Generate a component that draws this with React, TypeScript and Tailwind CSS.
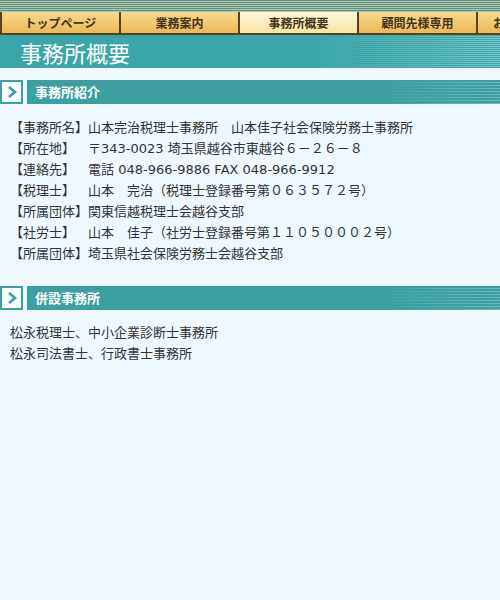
const tabs = [
  { label: "トップページ", active: false },
  { label: "業務案内", active: false },
  { label: "事務所概要", active: true },
  { label: "顧問先様専用", active: false },
  { label: "お問い合わせ", active: false },
];

const profile: [string, string][] = [
  ["【事務所名】", "山本完治税理士事務所　山本佳子社会保険労務士事務所"],
  ["【所在地】", "〒343-0023 埼玉県越谷市東越谷６－２６－８"],
  ["【連絡先】", "電話 048-966-9886 FAX 048-966-9912"],
  ["【税理士】", "山本　完治（税理士登録番号第０６３５７２号）"],
  ["【所属団体】", "関東信越税理士会越谷支部"],
  ["【社労士】", "山本　佳子（社労士登録番号第１１０５０００２号）"],
  ["【所属団体】", "埼玉県社会保険労務士会越谷支部"],
];

export default function App() {
  return (
    <div className="min-h-[600px] w-[500px] overflow-hidden bg-[#eff8ff] font-['DejaVu_Sans','Noto_Sans_CJK_JP',sans-serif] text-[#333]">
      <div className="h-3 bg-[repeating-linear-gradient(to_bottom,#64907f_0px,#64907f_1px,#a8c4ad_1px,#a8c4ad_2px)]" />

      <nav className="flex h-[23px] overflow-hidden border-b-2 border-l-2 border-[#5a4020]">
        {tabs.map((t, i) => (
          <div
            key={t.label}
            className={`flex w-[119px] shrink-0 items-center whitespace-nowrap border-r-2 border-[#5a4020] font-['Noto_Sans_CJK_JP',sans-serif] text-[12px] font-bold text-[#45331a] ${
              i === tabs.length - 1 ? "justify-start pl-[15px]" : "justify-center"
            } ${
              t.active
                ? "bg-[linear-gradient(to_bottom,#fff6d6,#f8e4a6)]"
                : "bg-[linear-gradient(to_bottom,#f8d98c,#ebb95c)]"
            }`}
          >
            {t.label}
          </div>
        ))}
      </nav>

      <div className="flex h-[33px] items-center bg-[linear-gradient(to_right,#3ba6a9_62%,rgba(59,166,169,0.35)),repeating-linear-gradient(to_bottom,#3fa9ad_0px,#3fa9ad_1px,#9ad9de_1px,#9ad9de_2px)] px-5">
        <h1 className="font-['Noto_Sans_CJK_JP',sans-serif] text-[22px] leading-none text-white">事務所概要</h1>
      </div>

      <SectionHeader title="事務所紹介" className="mt-3" />
      <div className="mt-[13px] grid grid-cols-[78px_1fr] px-[10px] text-[13px] leading-[21px]">
        {profile.map(([k, v], i) => (
          <div key={i} className="contents">
            <span>{k}</span>
            <span>{v}</span>
          </div>
        ))}
      </div>

      <SectionHeader title="併設事務所" className="mt-[22px]" />
      <div className="mt-[12px] px-[10px] text-[13px] leading-[21px]">
        <p>松永税理士、中小企業診断士事務所</p>
        <p>松永司法書士、行政書士事務所</p>
      </div>
    </div>
  );
}

function SectionHeader({ title, className }: { title: string; className?: string }) {
  return (
    <div className={`flex h-6 gap-1 ${className ?? ""}`}>
      <div className="flex w-[23px] shrink-0 items-center justify-center border-2 border-[#3ba0a3] bg-[#f6fcfc]">
        <svg width="12" height="14" viewBox="0 0 12 14" fill="none">
          <path d="M3 2l6 5-6 5" stroke="#3a9fa2" strokeWidth="2.6" strokeLinejoin="miter" />
        </svg>
      </div>
      <div className="flex flex-1 items-center bg-[linear-gradient(to_right,#3ca0a3_75%,rgba(60,160,163,0.4)),repeating-linear-gradient(to_bottom,#3d9fa3_0px,#3d9fa3_2px,#8fcfd3_2px,#8fcfd3_3px)] pl-2">
        <span className="font-['Noto_Sans_CJK_JP',sans-serif] text-[13px] font-bold text-white">{title}</span>
      </div>
    </div>
  );
}
